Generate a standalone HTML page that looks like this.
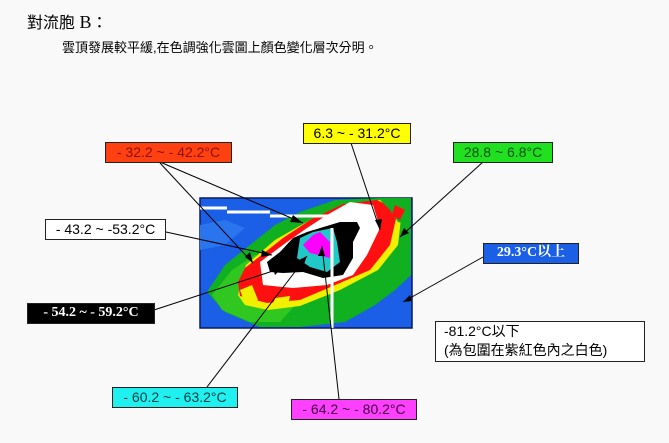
<!DOCTYPE html>
<html><head><meta charset="utf-8"><style>
body{margin:0;width:669px;height:443px;background:#f9f9f9;position:relative;overflow:hidden;font-family:"Liberation Sans","Noto Sans CJK TC",sans-serif;}
.t{position:absolute;white-space:nowrap;}
.b{position:absolute;box-sizing:border-box;border:1px solid #222;font-size:14px;line-height:18px;text-align:center;white-space:nowrap;font-family:"Liberation Sans","Noto Sans CJK TC",sans-serif;}
.s{font-family:"Liberation Serif","Noto Serif CJK SC",serif;font-weight:bold;}
</style></head><body>
<div class="t" style="left:27px;top:9px;font-size:16px;">對流胞 <span style="font-family:'Liberation Serif',serif;font-size:18px">B</span>：</div>
<div class="t" style="left:62px;top:37px;font-size:13px;">雲頂發展較平緩,在色調強化雲圖上顏色變化層次分明。</div>

<svg style="position:absolute;left:0;top:0" width="669" height="443">
<rect x="200" y="198" width="212" height="130" fill="#1a5fe6" stroke="#0a1a60" stroke-width="1.5"/>
<polygon fill="#2a74ee" points="200,225 225,220 245,228 225,245 200,250"/>
<polygon fill="#10b020" points="207,292 225,265 250,245 275,225 300,212 335,200 380,198 411,198 411,275 395,290 375,305 345,322 300,327 260,327 225,312"/>
<polygon fill="#30c820" points="212,295 232,270 255,255 285,262 300,300 280,322 250,322 222,310"/>
<polygon fill="#f0f000" points="238,295 246,265 275,240 310,220 345,204 380,200 402,210 398,245 378,270 340,290 300,306 268,310 245,305"/>
<polygon fill="#ff1010" points="245,268 283,238 310,220 343,204 377,200 398,210 390,245 370,270 333,286 300,300 267,303 240,296 238,282"/>
<polygon fill="#f0f000" points="240,290 252,285 258,300 245,304"/>
<polygon fill="#f0f000" points="275,298 290,296 288,305 272,306"/>
<polygon fill="#10b020" points="380,200 411,198 411,225 398,222 390,210"/>
<polygon fill="#ff1010" points="395,205 405,210 400,220 392,215"/>
<polygon fill="#ffffff" points="260,262 287,242 307,228 327,215 350,202 373,205 380,228 367,255 353,275 327,285 293,288 263,285"/>
<polygon fill="#000000" points="267,262 280,252 293,238 307,232 340,222 357,222 360,228 353,242 353,258 343,275 323,278 303,272 283,273 270,272"/>
<polygon fill="#20c8c8" points="297,258 300,238 313,232 333,228 337,242 340,262 327,272 310,267"/>
<polygon fill="#ff00ff" points="303,245 313,235 320,232 330,242 330,258 310,253"/>
<g stroke="#fff" stroke-width="3" fill="none">
<line x1="200" y1="208" x2="227" y2="208"/><line x1="227" y1="212" x2="270" y2="212"/><line x1="270" y1="216" x2="347" y2="216"/>
<line x1="332" y1="228" x2="332" y2="328"/>
</g>
<g stroke="#000" stroke-width="1">
<line x1="160" y1="162" x2="303" y2="223"/>
<line x1="160" y1="163" x2="253" y2="263"/>
<line x1="166" y1="232" x2="272" y2="255"/>
<line x1="154" y1="310" x2="282" y2="268"/>
<line x1="207" y1="387" x2="307" y2="256"/>
<line x1="339" y1="399" x2="322" y2="246"/>
<line x1="351" y1="143" x2="380" y2="230"/>
<line x1="483" y1="162" x2="400" y2="237"/>
<line x1="483" y1="257" x2="403" y2="302"/>
</g>
<g fill="#000">
<polygon points="303,223 293,215 290,222"/>
<polygon points="253,263 250,252 245,257"/>
<polygon points="272,255 262,250 261,257"/>
<polygon points="282,268 273,268 275,275"/>
<polygon points="307,256 299,260 304,264"/>
<polygon points="322,246 318,256 325,256"/>
<polygon points="380,230 375,220 382,219"/>
<polygon points="400,237 404,228 409,233"/>
<polygon points="403,302 410,295 412,301"/>
</g>
</svg>

<div class="b" style="left:105px;top:142px;width:127px;height:21px;background:#ff4010;color:#8a1000;">- 32.2 ~ - 42.2°C</div>
<div class="b" style="left:303px;top:123px;width:108px;height:21px;background:#ffff00;color:#000;">6.3 ~ - 31.2°C</div>
<div class="b" style="left:453px;top:142px;width:100px;height:21px;background:#20e020;color:#105010;">28.8 ~ 6.8°C</div>
<div class="b" style="left:45px;top:219px;width:121px;height:21px;background:#fff;color:#000;">- 43.2 ~ -53.2°C</div>
<div class="b s" style="left:483px;top:243px;width:96px;height:21px;background:#1a5fe6;color:#fff;">29.3°C以上</div>
<div class="b s" style="left:27px;top:303px;width:128px;height:21px;background:#000;color:#fff;">- 54.2 ~ - 59.2°C</div>
<div class="b" style="left:435px;top:321px;width:210px;height:41px;background:#fff;color:#000;text-align:left;padding-left:8px;line-height:19px;">-81.2°C以下<br>(為包圍在紫紅色內之白色)</div>
<div class="b" style="left:112px;top:387px;width:126px;height:21px;background:#20f0f0;color:#004040;">- 60.2 ~ - 63.2°C</div>
<div class="b" style="left:291px;top:399px;width:126px;height:21px;background:#ff40ff;color:#400040;">- 64.2 ~ - 80.2°C</div>
</body></html>
